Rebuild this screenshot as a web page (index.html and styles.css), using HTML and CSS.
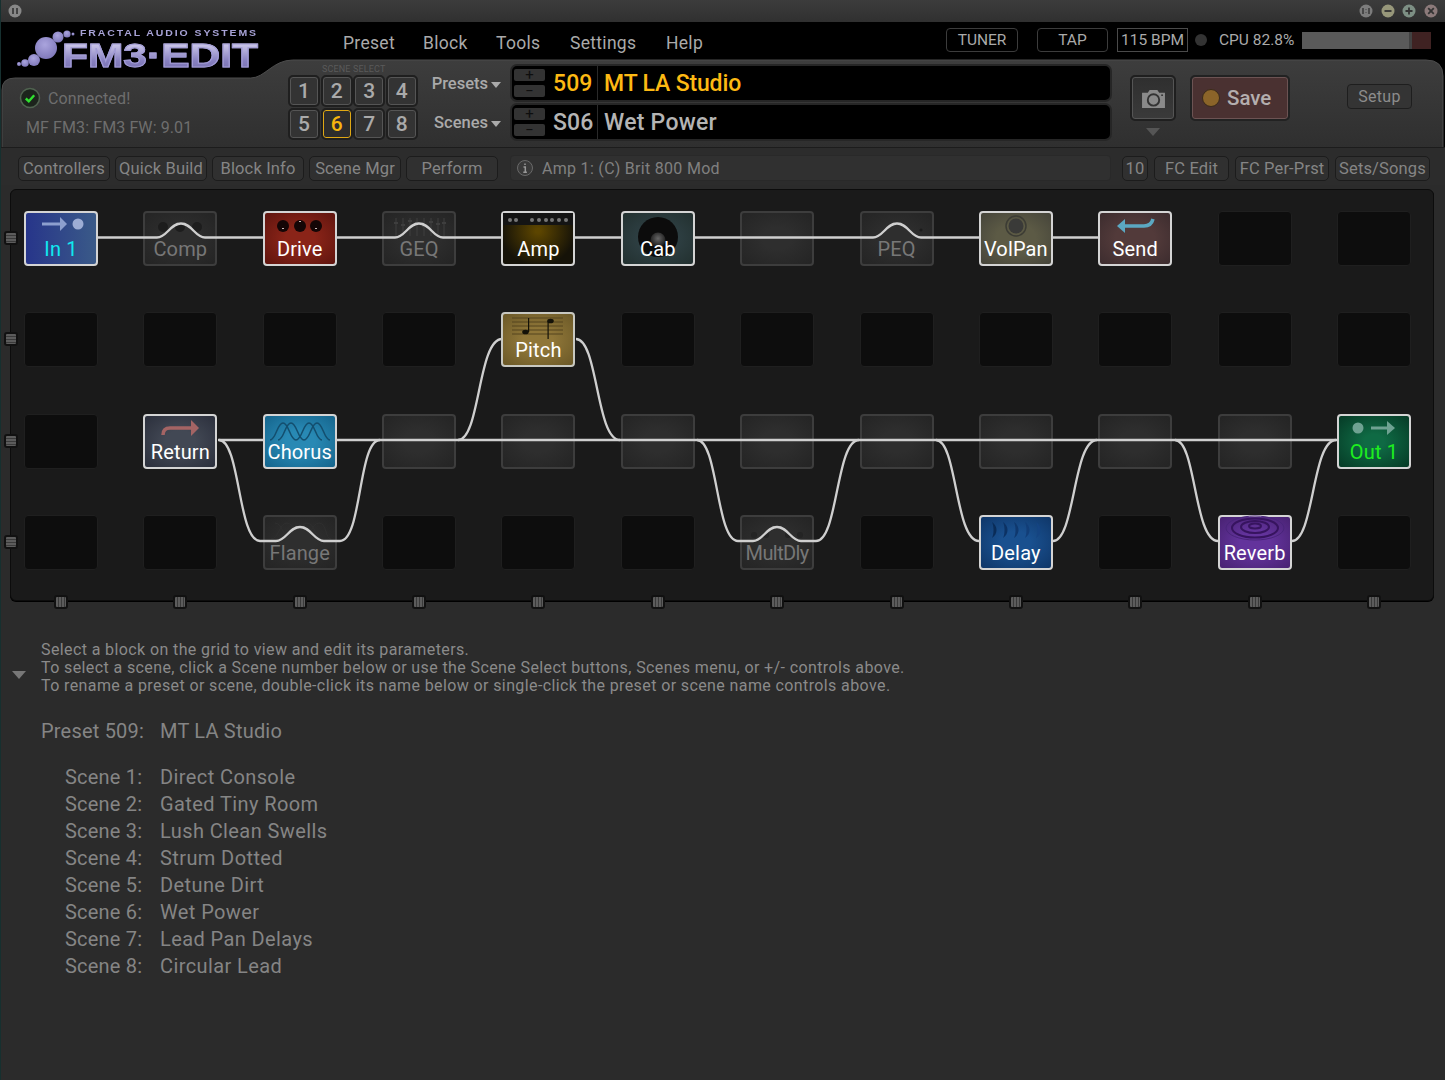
FILE: index.html
```html
<!DOCTYPE html>
<html lang="en">
<head>
<meta charset="utf-8">
<title>FM3-Edit</title>
<link rel="stylesheet" href="styles.css">
</head>
<body>
<div class="window">
  <div class="titlebar">
    <svg class="tb-ico" viewBox="0 0 16 16"><circle cx="8" cy="8" r="6.5" fill="#888"/><path d="M6 5v6M10 5v6" stroke="#333" stroke-width="1.6"/></svg>
    <div class="tb-right">
      <svg class="tb-ico" viewBox="0 0 16 16"><circle cx="8" cy="8" r="6.5" fill="#7c7c7c"/><path d="M5 5v6M11 5v6M8 6v.5M8 9.5v.5" stroke="#333" stroke-width="1.4"/></svg>
      <svg class="tb-ico" viewBox="0 0 16 16"><circle cx="8" cy="8" r="6.5" fill="#97977a"/><path d="M4.5 8h7" stroke="#333" stroke-width="1.8"/></svg>
      <svg class="tb-ico" viewBox="0 0 16 16"><circle cx="8" cy="8" r="6.5" fill="#7d8f84"/><path d="M4.5 8h7M8 4.5v7" stroke="#333" stroke-width="1.8"/></svg>
      <svg class="tb-ico" viewBox="0 0 16 16"><circle cx="8" cy="8" r="6.5" fill="#8c7a7a"/><path d="M5.2 5.2l5.6 5.6M10.8 5.2l-5.6 5.6" stroke="#333" stroke-width="1.8"/></svg>
    </div>
  </div>

  <header class="head">
    <svg class="head-bg" viewBox="0 0 1445 125" preserveAspectRatio="none">
      <defs><linearGradient id="hg" x1="0" y1="0" x2="0" y2="1"><stop offset="0" stop-color="#3d3d3d"/><stop offset="1" stop-color="#2f2f2f"/></linearGradient></defs>
      <path d="M1 126V68Q1 56 14 56H250C264 56 272 38 292 38H1426Q1443 38 1443 54V126Z" fill="url(#hg)" stroke="#4c4c4c" stroke-width="1"/>
    </svg>

    <div class="topbar">
      <div class="logo">
        <svg class="logo-dots" viewBox="0 0 80 50">
          <defs><radialGradient id="ld" cx=".45" cy=".35" r=".7"><stop offset="0" stop-color="#aaa4dd"/><stop offset="1" stop-color="#7d76b8"/></radialGradient></defs>
          <circle cx="45" cy="26" r="11" fill="url(#ld)"/><circle cx="57" cy="15" r="5.500" fill="url(#ld)"/><circle cx="66" cy="12" r="3.600" fill="url(#ld)"/><circle cx="72" cy="12" r="1.500" fill="url(#ld)"/>
          <circle cx="33" cy="38" r="6" fill="url(#ld)"/><circle cx="24" cy="41" r="3.800" fill="url(#ld)"/><circle cx="18" cy="42" r="2" fill="url(#ld)"/>
        </svg>
        <div class="logo-small">FRACTAL AUDIO SYSTEMS</div>
        <div class="logo-big">FM3·EDIT</div>
      </div>
      <nav class="menu"><span class="m1">Preset</span><span class="m2">Block</span><span class="m3">Tools</span><span class="m4">Settings</span><span>Help</span></nav>
      <div class="status">
        <span class="pill tuner">TUNER</span>
        <span class="pill tap">TAP</span>
        <span class="bpm">115 BPM</span>
        <span class="led"></span>
        <span class="cpu">CPU 82.8%</span>
        <span class="meter"><i class="m-fill"></i><i class="m-mid"></i></span>
      </div>
    </div>

    <div class="controls">
      <div class="conn">
        <div class="conn-row">
          <svg class="check" viewBox="0 0 22 22"><circle cx="11" cy="11" r="9.5" fill="#1c241c" stroke="#506350" stroke-width="1.5"/><path d="M6.8 11.5l3 2.8 5.4-6" fill="none" stroke="#2fe02f" stroke-width="2.4"/></svg>
          <span>Connected!</span>
        </div>
        <div class="fw">MF FM3: FM3 FW: 9.01</div>
      </div>
      <div class="scenes">
        <div class="scene-cap">SCENE SELECT</div>
        <div class="scene-grid">
          <span class="sc">1</span><span class="sc">2</span><span class="sc">3</span><span class="sc">4</span>
          <span class="sc">5</span><span class="sc on">6</span><span class="sc">7</span><span class="sc">8</span>
        </div>
      </div>
      <div class="nav-labels">
        <div class="nav-l">Presets<i class="caret"></i></div>
        <div class="nav-l">Scenes<i class="caret"></i></div>
      </div>
      <div class="displays">
        <div class="disp yellow">
          <div class="pm"><span class="pm-b">+</span><span class="pm-b">−</span></div>
          <span class="num">509</span><span class="name">MT LA Studio</span>
        </div>
        <div class="disp">
          <div class="pm"><span class="pm-b">+</span><span class="pm-b">−</span></div>
          <span class="num">S06</span><span class="name">Wet Power</span>
        </div>
      </div>
      <div class="cam-col">
        <div class="cam">
          <svg viewBox="0 0 26 22" class="cam-ico"><path d="M1 5h6l2-3h8l2 3h6v16H1z" fill="#8a8a8a"/><circle cx="13" cy="12.5" r="6" fill="#8a8a8a" stroke="#333" stroke-width="2"/><circle cx="22" cy="7.5" r="1" fill="#333"/></svg>
        </div>
        <i class="cam-tri"></i>
      </div>
      <div class="save"><i class="save-dot"></i>Save</div>
      <div class="setup">Setup</div>
    </div>
  </header>

  <div class="toolbar">
    <span class="tbtn w92">Controllers</span>
    <span class="tbtn w92">Quick Build</span>
    <span class="tbtn w92">Block Info</span>
    <span class="tbtn w92">Scene Mgr</span>
    <span class="tbtn w92">Perform</span>
    <div class="info">
      <svg class="info-ico" viewBox="0 0 18 18"><circle cx="9" cy="9" r="7.5" fill="#3a3a3a" stroke="#6a6a6a"/><path d="M9 4.5v1.6M7.5 8h1.8v5M7.3 13.2h3.6" fill="none" stroke="#999" stroke-width="1.5"/></svg>
      Amp 1: (C) Brit 800 Mod
    </div>
    <div class="tools-right">
      <span class="tbtn w26">10</span>
      <span class="tbtn w75">FC Edit</span>
      <span class="tbtn w94">FC Per-Prst</span>
      <span class="tbtn w95">Sets/Songs</span>
    </div>
  </div>

  <section class="panel">
    <svg class="wires" viewBox="10 189 1424 412">
      <g fill="none" stroke="#cfcfcf" stroke-width="2.300">
        <path d="M98 237.500H157C167 237.500 170 223.500 181 223.500C192 223.500 195 237.500 205 237.500H395C405 237.500 408 223.500 419 223.500C430 223.500 433 237.500 443 237.500H873C883 237.500 886 223.500 897 223.500C908 223.500 911 237.500 921 237.500H1098"/>
        <path d="M218 440H1337"/>
        <path d="M219 440C240 440 238 541 260 541H276C286 541 289 527 300 527C311 527 314 541 324 541H340C362 541 358 440 380 440"/>
        <path d="M458 440C480 440 478 339 502 339"/>
        <path d="M576 339C598 339 596 440 620 440"/>
        <path d="M697 440C718 440 716 541 738 541H753C763 541 766 527 777 527C788 527 791 541 801 541H816C838 541 836 440 859 440"/>
        <path d="M936 440C957 440 955 541 979 541"/>
        <path d="M1053 541C1075 541 1073 440 1097 440"/>
        <path d="M1175 440C1196 440 1194 541 1218 541"/>
        <path d="M1292 541C1314 541 1312 440 1336 440"/>
      </g>
    </svg>
    <div class="grid">
      <div class="b act in1"><i class="rh"></i><svg class="ic" viewBox="0 0 74 30"><path d="M18 13H38" stroke="#8d9fce" stroke-width="3"/><path d="M36 6l7 7-7 7z" fill="#8d9fce"/><circle cx="54" cy="13" r="5.500" fill="#9dadd5"/></svg><span class="l">In 1</span></div>
      <div class="b by"><svg class="ic" viewBox="0 0 74 30"><g fill="#1d1d1d"><circle cx="20" cy="16" r="5"/><circle cx="37" cy="16" r="5"/><circle cx="54" cy="16" r="5"/></g></svg><span class="l">Comp</span></div>
      <div class="b act drive"><svg class="ic" viewBox="0 0 74 30"><g fill="#140606"><circle cx="20" cy="15" r="6"/><circle cx="37" cy="15" r="6"/><circle cx="53" cy="15" r="6"/></g><g fill="#c9b8b8"><rect x="19" y="17" width="2" height="1"/><rect x="36" y="10" width="2" height="1"/><rect x="52" y="17" width="2" height="1"/></g></svg><span class="l">Drive</span></div>
      <div class="b by"><svg class="ic" viewBox="0 0 74 30"><g stroke="#3e3e3e" stroke-width="1"><path d="M14 7v18M21 7v18M28 7v18M35 7v18M42 7v18M49 7v18M56 7v18M62 7v18"/><path d="M12 12h4M19 14h4M26 10h4M33 12h4M40 15h4M47 11h4M54 13h4M60 12h4" stroke-width="2"/></g></svg><span class="l">GEQ</span></div>
      <div class="b act amp"><svg class="ic" viewBox="0 0 74 30"><rect x="2" y="2" width="70" height="12" fill="#141414"/><g fill="#777"><circle cx="9" cy="9" r="2"/><circle cx="15" cy="9" r="2"/><circle cx="31" cy="9" r="2"/><circle cx="38" cy="9" r="2"/><circle cx="45" cy="9" r="2"/><circle cx="51" cy="9" r="2"/><circle cx="58" cy="9" r="2"/><circle cx="65" cy="9" r="2"/></g></svg><span class="l">Amp</span></div>
      <div class="b act cab"><svg class="ic ic-full" viewBox="0 0 74 55"><defs><radialGradient id="cone" cx=".5" cy=".4" r=".6"><stop offset="0" stop-color="#666"/><stop offset="1" stop-color="#151515"/></radialGradient></defs><circle cx="37" cy="26" r="20" fill="#0c0c0c"/><circle cx="37" cy="29" r="7.500" fill="url(#cone)"/></svg><span class="l">Cab</span></div>
      <div class="b by"></div>
      <div class="b by"><svg class="ic" viewBox="0 0 74 30"><circle cx="61" cy="19" r="1.500" fill="#1c1c1c"/></svg><span class="l">PEQ</span></div>
      <div class="b act volpan"><svg class="ic" viewBox="0 0 74 30"><circle cx="37" cy="15" r="10" fill="none" stroke="#3c3c34" stroke-width="1.500"/><circle cx="37" cy="15" r="7.500" fill="#3a3a38"/></svg><span class="l">VolPan</span></div>
      <div class="b act send"><svg class="ic" viewBox="0 0 74 30"><path d="M24 15H46C51 15 54 12 55 8" fill="none" stroke="#5ba8c2" stroke-width="3.500"/><path d="M19 15l8-7v14z" fill="#5ba8c2"/></svg><span class="l">Send</span></div>
      <div class="b"></div>
      <div class="b"></div>

      <div class="b"><i class="rh"></i></div><div class="b"></div><div class="b"></div><div class="b"></div>
      <div class="b act pitch"><svg class="ic" viewBox="0 0 74 30"><g stroke="#54451e" stroke-width="1"><path d="M11 6H62M11 10H62M11 14H62M11 18H62M11 22H62"/></g><g fill="#141208"><ellipse cx="24.500" cy="20" rx="3.300" ry="2.300"/><path d="M27 20V6h1.200v14z"/><ellipse cx="49.500" cy="9" rx="3.300" ry="2.300"/><path d="M46.500 9V27h1.200V9z"/></g></svg><span class="l">Pitch</span></div>
      <div class="b"></div><div class="b"></div><div class="b"></div><div class="b"></div><div class="b"></div><div class="b"></div><div class="b"></div>

      <div class="b"><i class="rh"></i></div>
      <div class="b act ret"><svg class="ic" viewBox="0 0 74 30"><path d="M20 21C20 16 23 14 27 14H50" fill="none" stroke="#a46464" stroke-width="3.500"/><path d="M48 6l8 8-8 8z" fill="#a46464"/></svg><span class="l">Return</span></div>
      <div class="b act chorus"><svg class="ic" viewBox="0 0 74 30"><g fill="none" stroke="#134e6e" stroke-width="1.500"><path d="M7 26C13 26 14 9 20 9S27 26 33 26 40 9 46 9 53 26 59 26"/><path d="M15 26C21 26 22 9 28 9S35 26 41 26 48 9 54 9 61 26 67 26"/></g></svg><span class="l">Chorus</span></div>
      <div class="b by"></div><div class="b by"></div><div class="b by"></div><div class="b by"></div><div class="b by"></div><div class="b by"></div><div class="b by"></div><div class="b by"></div>
      <div class="b act out1"><svg class="ic" viewBox="0 0 74 30"><circle cx="21" cy="14" r="5.500" fill="#6fa292"/><path d="M34 14H52" stroke="#6fa292" stroke-width="3"/><path d="M50 7l8 7-8 7z" fill="#6fa292"/></svg><span class="l">Out 1</span></div>

      <div class="b"><i class="rh"></i><i class="ch"></i></div>
      <div class="b"><i class="ch"></i></div>
      <div class="b by"><i class="ch"></i><svg class="ic" viewBox="0 0 74 30"><g fill="none" stroke="#2f2f2f"><path d="M8 24C16 24 16 8 24 8S32 24 40 24 48 8 56 8 62 24 68 24"/><path d="M12 8C20 8 20 24 28 24S36 8 44 8 52 24 60 24"/></g></svg><span class="l">Flange</span></div>
      <div class="b"><i class="ch"></i></div>
      <div class="b"><i class="ch"></i></div>
      <div class="b"><i class="ch"></i></div>
      <div class="b by"><i class="ch"></i><svg class="ic" viewBox="0 0 74 30"><g fill="#242424"><circle cx="14" cy="20" r="3"/><circle cx="26" cy="20" r="3"/><circle cx="48" cy="20" r="3"/><circle cx="60" cy="20" r="3"/></g></svg><span class="l tight">MultDly</span></div>
      <div class="b"><i class="ch"></i></div>
      <div class="b act delay"><i class="ch"></i><svg class="ic" viewBox="0 0 74 30"><path fill="#0a2c58" d="M13 7C19 11 19 19 13 23C15 19 15 11 13 7z"/><path fill="#0c3264" d="M24 7C30 11 30 19 24 23C26 19 26 11 24 7z"/><path fill="#0f386e" d="M35 7C41 11 41 19 35 23C37 19 37 11 35 7z"/><path fill="#123e78" d="M46 7C52 11 52 19 46 23C48 19 48 11 46 7z"/><path fill="#154482" d="M57 7C63 11 63 19 57 23C59 19 59 11 57 7z"/></svg><span class="l">Delay</span></div>
      <div class="b"><i class="ch"></i></div>
      <div class="b act reverb"><i class="ch"></i><svg class="ic" viewBox="0 0 74 30"><g fill="none" stroke="#37145f"><ellipse cx="37" cy="13" rx="29" ry="12" stroke="#49257a" stroke-width="1"/><ellipse cx="37" cy="13" rx="23" ry="9.500" stroke-width="2"/><ellipse cx="37" cy="12" rx="14" ry="6" stroke-width="2"/><ellipse cx="37" cy="11" rx="6" ry="2.500" stroke-width="2"/></g></svg><span class="l">Reverb</span></div>
      <div class="b"><i class="ch"></i></div>
    </div>
  </section>

  <section class="desc">
    <i class="desc-tri"></i>
    <div class="hints">
      <p>Select a block on the grid to view and edit its parameters.</p>
      <p>To select a scene, click a Scene number below or use the Scene Select buttons, Scenes menu, or +/- controls above.</p>
      <p>To rename a preset or scene, double-click its name below or single-click the preset or scene name controls above.</p>
    </div>
    <div class="preset-line"><span class="k0">Preset 509:</span><span>MT LA Studio</span></div>
    <dl class="scene-list">
      <dt>Scene 1:</dt><dd>Direct Console</dd>
      <dt>Scene 2:</dt><dd>Gated Tiny Room</dd>
      <dt>Scene 3:</dt><dd>Lush Clean Swells</dd>
      <dt>Scene 4:</dt><dd>Strum Dotted</dd>
      <dt>Scene 5:</dt><dd>Detune Dirt</dd>
      <dt>Scene 6:</dt><dd>Wet Power</dd>
      <dt>Scene 7:</dt><dd>Lead Pan Delays</dd>
      <dt>Scene 8:</dt><dd>Circular Lead</dd>
    </dl>
  </section>
</div>
</body>
</html>
```
FILE: styles.css
```css
* { box-sizing: border-box; }
html, body { margin: 0; padding: 0; height: 100%; }
body { background: #2b2b2b; font-family: Roboto, "Noto Sans", sans-serif; color: #999; overflow: hidden; }
.window { width: 1445px; height: 1080px; display: flex; flex-direction: column; background: #2b2b2b; border-left: 1px solid #16302f; }

.titlebar { height: 22px; flex: none; display: flex; align-items: center; justify-content: space-between; padding: 0 6px 0 6px; background: linear-gradient(#3c3c3c, #303030); }
.tb-ico { width: 16px; height: 16px; display: block; }
.tb-right { display: flex; gap: 5.700px; }

.head { height: 125px; flex: none; position: relative; background: #000; display: flex; flex-direction: column; }
.head-bg { position: absolute; inset: 0; width: 100%; height: 100%; }
.topbar { height: 38px; flex: none; position: relative; display: flex; align-items: flex-start; }

.logo { width: 342px; padding-left: 63px; height: 50px; position: relative; flex: none; }
.logo-dots { position: absolute; left: 0; top: 0; width: 80px; height: 50px; overflow: visible; }
.logo-small { position: relative; font: bold 10.500px "Liberation Sans", sans-serif; letter-spacing: 1.900px; color: #a7a2d6; margin: 6px 0 0 16px; line-height: 11px; white-space: nowrap; transform: scaleY(.85); }
.logo-big { position: relative; font: bold 34px/27px "Liberation Sans", sans-serif; white-space: nowrap; margin: 3px 0 0 -2px; width: 160px; transform-origin: left center; transform: scaleX(1.25); background: linear-gradient(#d4d0ee, #8780c0 70%, #7a74b4); -webkit-background-clip: text; background-clip: text; color: transparent; -webkit-text-stroke: 1px #a29cd6; }

.menu { display: flex; font-size: 17.500px; color: #aaa; margin-top: 9px; letter-spacing: .3px; line-height: 24px; }
.menu span { display: block; }
.m1 { width: 80px; } .m2 { width: 73px; } .m3 { width: 74px; } .m4 { width: 96px; }

.status { position: absolute; right: 14px; top: 6px; display: flex; align-items: center; font-size: 15.500px; color: #aaa; }
.pill { height: 24px; border: 1px solid #3c3c3c; border-radius: 4px; display: flex; align-items: center; justify-content: center; }
.tuner { width: 72px; margin-right: 19px; }
.tap { width: 71px; margin-right: 9px; }
.bpm { width: 71px; height: 24px; border: 1px solid #4a4a4a; display: flex; align-items: center; justify-content: center; white-space: nowrap; }
.led { width: 12px; height: 12px; border-radius: 50%; background: #333; margin: 0 12px 0 7px; }
.cpu { white-space: nowrap; width: 83px; }
.meter { width: 129px; height: 17px; background: #3f2222; display: flex; }
.m-fill { width: 107px; background: #5a5a5a; }
.m-mid { width: 3px; background: #424242; }

.controls { position: relative; flex: 1; display: flex; align-items: flex-start; }
.conn { width: 289px; flex: none; padding: 27px 0 0 18px; color: #6e6e6e; font-size: 16px; }
.conn-row { display: flex; align-items: center; gap: 7px; height: 22px; letter-spacing: .15px; }
.check { width: 22px; height: 22px; }
.fw { margin: 8px 0 0 7px; letter-spacing: .1px; line-height: 22px; white-space: nowrap; }

.scenes { width: 130px; flex: none; }
.scene-cap { font-size: 9px; color: #5a5a5a; line-height: 11px; margin: 4px 0 2px 32px; letter-spacing: .15px; white-space: nowrap; }
.scene-grid { display: grid; grid-template-columns: repeat(4, 28px); grid-auto-rows: 28px; column-gap: 4.600px; row-gap: 5px; }
.sc { display: flex; align-items: center; justify-content: center; border: 1px solid #555; outline: 2px solid #1f1f1f; border-radius: 3px; background: #333; color: #aaa; font-size: 21px; font-weight: 500; }
.sc.on { border-color: #e0a814; color: #f5b50e; background: #2d2d2d; }

.nav-labels { width: 81px; flex: none; margin-top: 12px; color: #aaa; font-size: 16.500px; }
.nav-l { height: 39px; line-height: 24px; display: flex; justify-content: flex-end; align-items: flex-start; font-weight: 500; }
.caret { width: 0; height: 0; border: 5px solid transparent; border-top: 6px solid #aaa; border-bottom: 0; margin: 10px 0 0 3px; }

.displays { width: 600px; flex: none; margin: 5px 0 0 10px; display: flex; flex-direction: column; gap: 3px; }
.disp { height: 36px; background: #000; border-radius: 6px; display: flex; align-items: stretch; color: #b4b4b4; font-size: 23px; outline: 2px solid #262626; outline-offset: -1px; font-weight: 500; }
.disp.yellow { color: #fdb913; }
.disp.yellow .name { letter-spacing: -.15px; }
.pm { width: 42px; flex: none; padding: 4px 0 4px 3px; display: flex; flex-direction: column; gap: 4px; }
.pm-b { width: 31px; height: 12px; background: #333; color: #0e0e0e; border-radius: 2px; font-size: 15px; line-height: 12px; text-align: center; font-weight: 400; }
.num { width: 45px; flex: none; line-height: 38px; white-space: nowrap; border-right: 1px solid #2a2a2a; letter-spacing: .1px; }
.name { padding-left: 6px; line-height: 38px; letter-spacing: .25px; }

.cam-col { margin: 17px 0 0 21px; width: 42px; flex: none; display: flex; flex-direction: column; align-items: center; }
.cam { width: 42px; height: 42px; border: 1px solid #555; outline: 2px solid #1f1f1f; border-radius: 3px; background: linear-gradient(#2f2f2f, #3a3a3a); display: flex; align-items: center; justify-content: center; }
.cam-ico { width: 25px; height: 21px; }
.cam-tri { width: 0; height: 0; border: 7px solid transparent; border-top: 8px solid #555; border-bottom: 0; margin-top: 9px; }
.save { margin: 17px 0 0 18px; width: 96px; height: 42px; flex: none; background: #4a3131; border: 1px solid #6c5353; outline: 2px solid #222; border-radius: 3px; display: flex; align-items: center; padding-left: 9px; gap: 7px; font-size: 20.500px; color: #b4aeae; font-weight: 500; }
.save-dot { width: 18px; height: 18px; border-radius: 50%; background: #8b6429; border: 1px solid #3a2a1a; }
.setup { margin: 24px 0 0 59px; width: 65px; height: 25px; flex: none; border: 1px solid #1e1e1e; border-radius: 4px; background: #343434; color: #8c8c8c; font-size: 16px; display: flex; align-items: center; justify-content: center; letter-spacing: .3px; }

.toolbar { height: 38px; flex: none; display: flex; align-items: center; padding: 3px 14px 0 17px; gap: 5px; background: #2c2c2c; border-top: 1px solid #1c1c1c; font-size: 16.500px; color: #858585; letter-spacing: .15px; }
.tbtn { height: 25px; border: 1px solid #1c1c1c; border-radius: 5px; background: #303030; display: flex; align-items: center; justify-content: center; white-space: nowrap; flex: none; }
.w92 { width: 92px; } .w26 { width: 26px; } .w75 { width: 75px; } .w94 { width: 94px; } .w95 { width: 95px; }
.info { width: 601px; height: 26px; margin: 0 6px 0 7px; border: 1px solid #292929; border-radius: 4px; background: #303030; display: flex; align-items: center; padding-left: 5px; gap: 8px; flex: none; font-size: 16px; color: #808080; letter-spacing: .3px; }
.info-ico { width: 18px; height: 18px; }
.tools-right { display: flex; gap: 6px; flex: none; }

.panel { position: relative; flex: none; width: 1424px; height: 412px; margin: 4px 0 0 9px; background: #1a1a1a; border: 1px solid #0c0c0c; border-radius: 6px; box-shadow: 0 1px 0 #000; }
.wires { position: absolute; left: -1px; top: -1px; width: 1424px; height: 412px; z-index: 1; pointer-events: none; }
.grid { display: grid; grid-template-columns: repeat(12, 74px); grid-auto-rows: 55px; column-gap: 45.360px; row-gap: 46.300px; padding: 21px 0 0 13px; }

.b { position: relative; border: 1px solid #1f1f1f; border-radius: 4px; background: #0d0d0d; display: flex; align-items: flex-end; justify-content: center; }
.by { border: 2px solid #3d3d3d; background: radial-gradient(ellipse at center, #2e2e2e 30%, #242424 100%); }
.act { border: 2px solid #d4d4d4; z-index: 2; }
.l { position: relative; font-size: 20px; line-height: 25px; margin-bottom: 2px; color: #fff; white-space: nowrap; letter-spacing: .15px; }
.l.tight { letter-spacing: -.6px; }
.by .l { color: #777; }
.ic { position: absolute; left: -2px; top: -2px; width: 74px; height: 30px; }
.ic-full { height: 55px; }

.in1 { background: linear-gradient(90deg, #27358a, #3a5a88); }
.in1 .l { color: #10e8f0; }
.drive { background: radial-gradient(ellipse at center, #8a2418 30%, #5e140e 100%); }
.amp { background: radial-gradient(ellipse at 50% 35%, #5c4500 5%, #151208 75%); }
.cab { background: radial-gradient(ellipse at center, #314348 20%, #22302f 100%); overflow: hidden; }
.volpan { background: radial-gradient(ellipse at center, #5c5a45 40%, #45443a 100%); }
.send { background: radial-gradient(ellipse at center, #523a3a 40%, #3c2c2e 100%); }
.pitch { background: radial-gradient(ellipse at center, #8f7638 30%, #6a5827 100%); border-color: #c8c8c0; }
.ret { background: radial-gradient(ellipse at center, #424854 30%, #2b2f3c 100%); }
.chorus { background: radial-gradient(ellipse at center, #2889b4 30%, #15648c 100%); }
.out1 { background: radial-gradient(ellipse at center, #0f6a44 20%, #063a26 100%); }
.out1 .l { color: #1eef1e; }
.delay { background: radial-gradient(ellipse at center, #19508f 30%, #0f3668 100%); }
.reverb { background: radial-gradient(ellipse at center, #63339c 30%, #482272 100%); }

.rh, .ch { position: absolute; width: 14px; height: 14px; border: 2px solid #111; border-radius: 3px; z-index: 3; }
.rh { left: -21px; top: 19px; background: repeating-linear-gradient(#5c5c5c 0 2px, #3a3a3a 2px 3px); }
.act .rh { left: -22px; top: 18px; }
.ch { left: 29px; top: 79px; background: repeating-linear-gradient(90deg, #5c5c5c 0 2px, #3a3a3a 2px 3px); }
.by .ch, .act .ch { left: 28px; top: 78px; }

.desc { flex: 1; position: relative; padding: 40px 0 0 40px; font-size: 16px; color: #8a8a8a; }
.desc-tri { position: absolute; left: 11px; top: 70px; width: 0; height: 0; border: 7px solid transparent; border-top: 8px solid #777; border-bottom: 0; }
.hints p { margin: 0; line-height: 18px; letter-spacing: .39px; white-space: nowrap; }
.preset-line { display: flex; margin-top: 23px; font-size: 20px; line-height: 27px; letter-spacing: .2px; color: #858585; }
.k0 { width: 119px; flex: none; }
.scene-list { display: grid; grid-template-columns: 95px 1fr; margin: 19px 0 0 24px; font-size: 20px; line-height: 27px; letter-spacing: .2px; color: #858585; }
.scene-list dt, .scene-list dd { margin: 0; }
.scene-list dd { letter-spacing: .4px; }
```
